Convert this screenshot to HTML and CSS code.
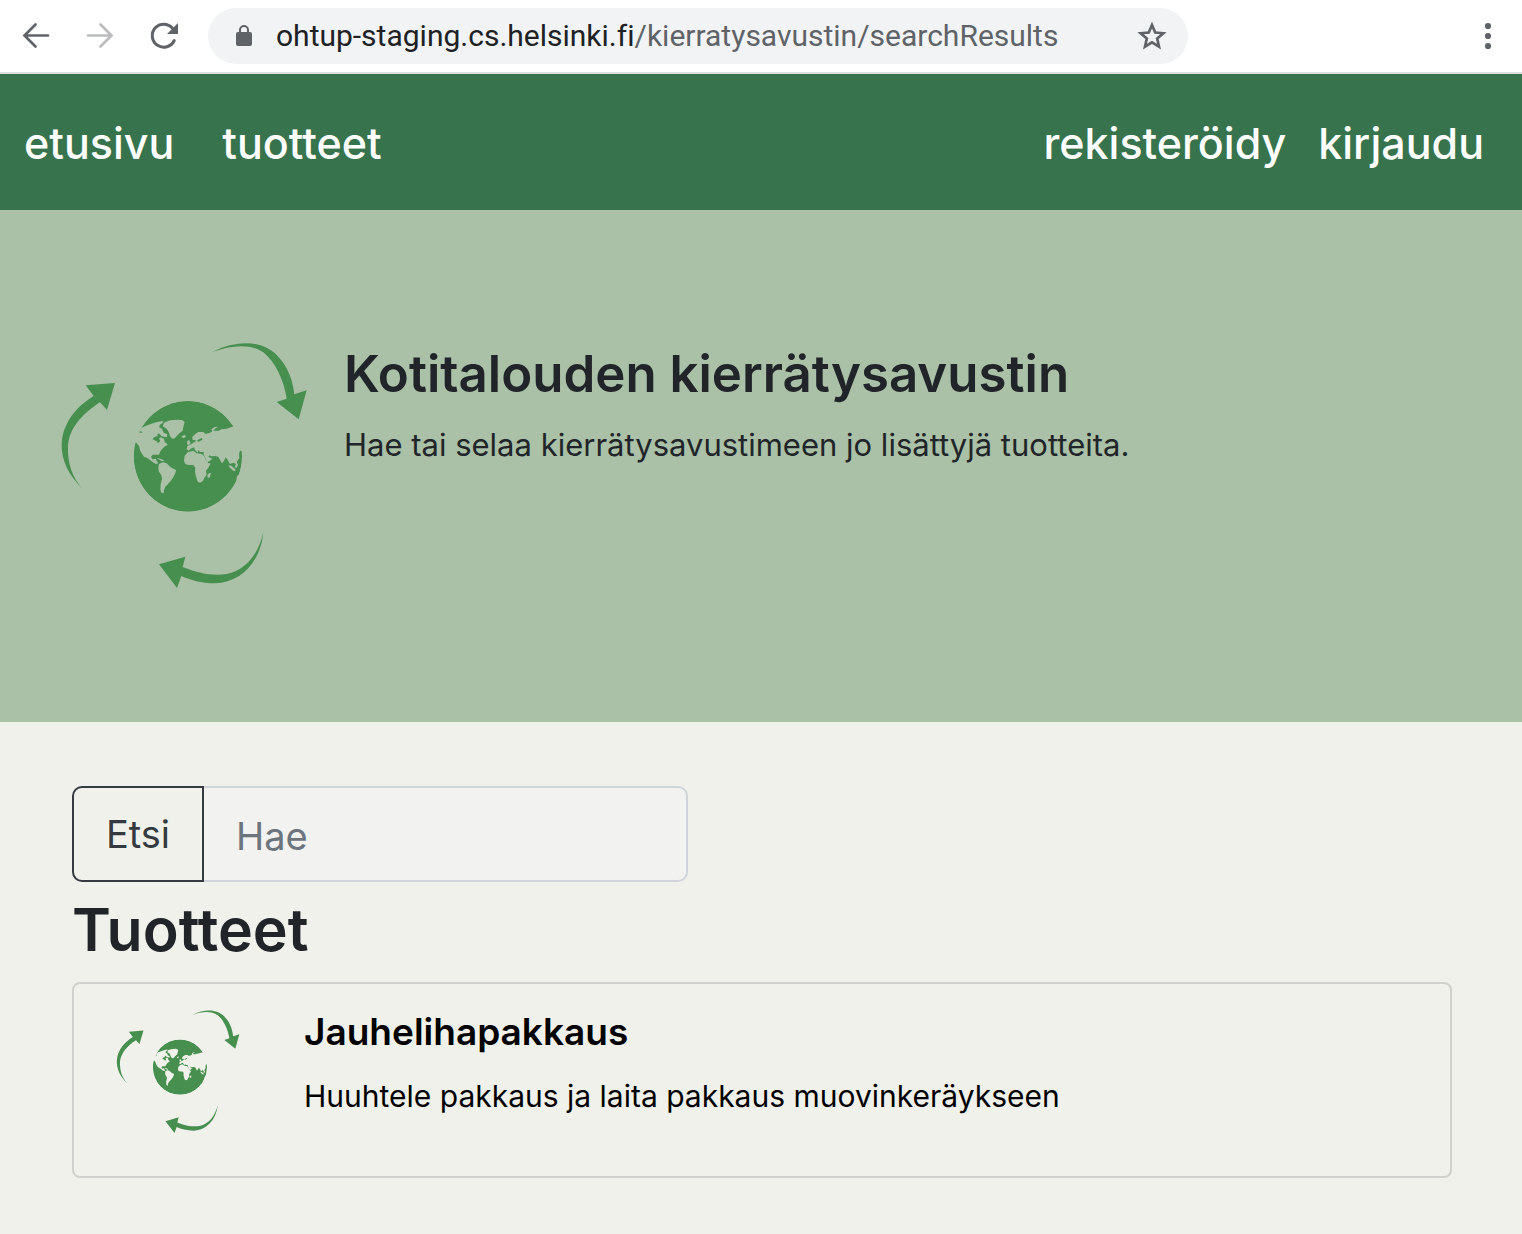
FILE: index.html
```html
<!DOCTYPE html>
<html lang="fi">
<head>
<meta charset="utf-8">
<meta name="viewport" content="width=device-width, initial-scale=1">
<title>Kotitalouden kierrätysavustin</title>
<link rel="stylesheet" href="styles.css">
</head>
<body>
<svg class="defs" aria-hidden="true">
  <defs>
    <mask id="land" maskUnits="userSpaceOnUse" x="270" y="200" width="350" height="360">
      <ellipse cx="443.500" cy="379" rx="162.500" ry="166" fill="#fff"/>
      <g fill="#000">
        <path d="M270 306 298 307 304 309 308 306 298 303 309 291 330 283 348 277 366 273 371 276 360 284 357 292 366 296 371 308 382 313 380 322 372 320 364 318 358 311 352 312 353 318 342 322 338 328 350 334 354 340 361 333 357 325 363 322 372 326 374 336 384 344 376 348 366 357 360 366 357 374 338 374 333 380 337 388 347 386 350 392 355 400 347 402 335 394 322 384 312 380 304 368 300 360 297 348 290 340 288 336 270 330Z"/>
        <path d="M270 306 309 290 298 303Z"/>
        <path d="M357 402 368 397 380 400 388 408 396 414 408 420 406 430 400 442 392 453 382 464 376 470 372 480 371 490 364 488 361 478 362 462 366 446 364 436 356 424 355 412Z"/>
        <path d="M372 278 390 271 415 269 428 271 434 277 430 290 428 302 418 310 410 318 404 325 397 326 390 318 386 306 380 296 368 289Z"/>
        <path d="M424 319 434 315 438 320 430 325ZM442 333 447 330 452 340 447 345 441 343ZM350 384 362 386 374 392 366 394Z"/>
        <path d="M440 358 442 348 455 342 462 337 470 332 476 335 487 329 486 324 478 327 470 333 464 330 458 330 457 320 466 312 475 306 490 306 497 312 510 308 517 304 514 298 524 291 534 290 525 296 520 302 535 302 545 298 560 296 575 291 620 280 620 365 600 362 597 372 598 384 590 396 594 404 590 414 584 410 588 402 580 398 570 402 563 390 557 382 552 392 546 400 540 390 535 380 525 378 514 379 508 376 505 380 512 384 517 386 510 392 502 397 494 380 490 372 492 366 480 366 476 360 472 368 464 358 462 352 452 356 446 362Z"/>
        <path d="M443 367 460 362 470 370 485 372 492 378 498 390 505 400 512 400 505 413 498 422 500 434 494 442 488 454 480 458 473 455 468 440 465 426 466 414 460 405 446 405 436 402 432 392 434 378Z"/>
        <path d="M508 429 513 430 508 444 502 442 503 434ZM565 405 575 408 588 420 582 424 570 414ZM610 420 598 432 590 440 590 454 610 450Z"/>
      </g>
    </mask>
    <symbol id="logo" viewBox="0 0 870 810">
      <g fill="#478f4f">
        <ellipse cx="443.500" cy="379" rx="162.500" ry="166" mask="url(#land)"/>
        <path d="M516 66C600 25 670 35 710 75 740 105 758 145 763 193L800 181 776 268 710 216 740 206C732 150 705 95 670 67 630 40 575 45 516 66Z"/>
        <path d="M129 478C85 435 63 390 65 340 70 275 110 230 161 198L137 166 225 159 201 240 180 217C130 250 90 290 84 345 82 400 95 440 129 478Z"/>
        <path d="M670 608C660 700 600 758 525 760 485 760 450 750 424 738L411 774 357 703 436 680 428 711C480 732 520 738 560 732 620 720 655 670 670 608Z"/>
      </g>
    </symbol>
  </defs>
</svg>

<div class="toolbar">
  <button class="tool" type="button" aria-label="Takaisin">
    <svg viewBox="0 0 32 32"><path d="M28 15.500H5M15.500 4.500 4.500 15.500 15.500 26.500" fill="none" stroke="#5f6368" stroke-width="2.700" stroke-linecap="round"/></svg>
  </button>
  <button class="tool" type="button" aria-label="Eteenpäin" disabled>
    <svg viewBox="0 0 32 32"><path d="M4 15.500H27M16.500 4.500 27.500 15.500 16.500 26.500" fill="none" stroke="#babcbe" stroke-width="2.700" stroke-linecap="round"/></svg>
  </button>
  <button class="tool" type="button" aria-label="Lataa uudelleen">
    <svg viewBox="0 0 32 32"><path d="M26.200 20.500A11.500 11.500 0 1 1 24.500 8.200" fill="none" stroke="#5f6368" stroke-width="3" stroke-linecap="round"/><path d="M30 3V14H19Z" fill="#5f6368"/></svg>
  </button>
  <div class="address">
    <svg class="lock" viewBox="0 0 16 22"><rect y="7" width="16" height="14" rx="2" fill="#5f6368"/><path d="M4 8V5a4 4 0 0 1 8 0V8" fill="none" stroke="#5f6368" stroke-width="2"/></svg>
    <span class="url"><span class="host">ohtup-staging.cs.helsinki.fi</span>/kierratysavustin/searchResults</span>
    <button class="star" type="button" aria-label="Lisää kirjanmerkki">
      <svg viewBox="0 0 32 32"><path d="M16 5 19.200 12.500 27.400 13.200 21.200 18.600 23 26.600 16 22.400 9 26.600 10.800 18.600 4.600 13.200 12.800 12.500Z" fill="none" stroke="#5f6368" stroke-width="2.700"/></svg>
    </button>
  </div>
  <button class="tool menu" type="button" aria-label="Valikko">
    <svg viewBox="0 0 32 32" fill="#5f6368"><circle cx="16" cy="6" r="3.100"/><circle cx="16" cy="16" r="3.100"/><circle cx="16" cy="26" r="3.100"/></svg>
  </button>
</div>

<nav class="navbar">
  <div class="nav-main"><a href="#etusivu">etusivu</a><a href="#tuotteet">tuotteet</a></div>
  <div class="nav-user"><a href="#rekisteroidy">rekisteröidy</a><a href="#kirjaudu">kirjaudu</a></div>
</nav>

<header class="hero">
  <svg class="hero-logo" role="img" aria-label="Maapallo ja kiertävät nuolet"><use href="#logo"/></svg>
  <div>
    <h1>Kotitalouden kierrätysavustin</h1>
    <p>Hae tai selaa kierrätysavustimeen jo lisättyjä tuotteita.</p>
  </div>
</header>

<main class="content">
  <form class="search">
    <button type="submit">Etsi</button>
    <input type="text" placeholder="Hae" aria-label="Hae">
  </form>
  <h2>Tuotteet</h2>
  <a class="card" href="#jauhelihapakkaus">
    <svg class="card-logo" aria-hidden="true"><use href="#logo"/></svg>
    <div>
      <h3>Jauhelihapakkaus</h3>
      <p>Huuhtele pakkaus ja laita pakkaus muovinkeräykseen</p>
    </div>
  </a>
</main>
</body>
</html>
```
FILE: styles.css
```css
* { box-sizing: border-box; }

body {
  margin: 0;
  background: #f1f1eb;
  color: #212529;
  font-family: Inter, "Liberation Sans", sans-serif;
  font-variant-ligatures: none;
}

h1, h2, h3, p { margin: 0; }
a { color: inherit; text-decoration: none; }
button { padding: 0; border: 0; background: none; font: inherit; color: inherit; }
svg { display: block; }

.defs { position: absolute; width: 0; height: 0; }

/* Browser toolbar */
.toolbar {
  display: flex;
  align-items: center;
  gap: 32px;
  height: 74px;
  padding: 8px 18px 8px 20px;
  border-bottom: 2px solid #dadce0;
  background: #fff;
}
.tool, .tool svg, .star, .star svg { width: 32px; height: 32px; }
.menu { margin-left: auto; }
.address {
  display: flex;
  align-items: center;
  flex: 0 1 980px;
  height: 56px;
  margin-left: -4px;
  padding: 0 20px 0 28px;
  border-radius: 28px;
  background: #f1f3f4;
  color: #5f6368;
  font-family: Roboto, sans-serif;
  font-size: 30px;
  line-height: 32px;
}
.lock { width: 16px; height: 22px; margin-right: 24px; }
.host { color: #202124; }
.star { margin-left: auto; }

/* Site navigation */
.navbar {
  display: flex;
  justify-content: space-between;
  padding: 33px 38px 31px 24px;
  background: #37734c;
  color: #fff;
  font-size: 43px;
  line-height: 72px;
  font-weight: 500;
}
.nav-main, .nav-user { display: flex; }
.nav-main { gap: 48px; }
.nav-user { gap: 32px; }

/* Intro banner */
.hero {
  display: flex;
  gap: 14px;
  padding: 120px 40px 122px;
  background: #aac0a7;
}
.hero-logo { flex: none; width: 290px; height: 270px; }
.hero h1 {
  margin: 10px 0 13px;
  font-size: 51px;
  line-height: 68px;
  font-weight: 600;
}
.hero p { font-size: 31px; line-height: 48px; }

/* Search and product list */
.content { padding: 64px 70px 56px 72px; }
.search {
  display: flex;
  max-width: 616px;
  height: 96px;
  font-size: 38px;
}
.search button {
  flex: none;
  width: 132px;
  border: 2px solid #343a40;
  border-radius: 10px 0 0 10px;
  color: #343a40;
}
.search input {
  flex: 1;
  min-width: 0;
  padding: 4px 32px 0;
  border: 2px solid #ced4da;
  border-left: 0;
  border-radius: 0 10px 10px 0;
  background: #f2f2f0;
  font: inherit;
}
.search input::placeholder { color: #6c757d; opacity: 1; }
.content h2 {
  margin: 12px 0 16px;
  font-size: 59px;
  line-height: 72px;
  font-weight: 600;
}
.card {
  display: flex;
  gap: 53px;
  padding: 20px 32px 37px;
  border: 2px solid #d0d1cc;
  border-radius: 8px;
  color: #000;
}
.card-logo { flex: none; width: 145px; height: 135px; }
.card h3 {
  margin: 4px 0 16px;
  font-size: 37px;
  line-height: 48px;
  font-weight: 600;
}
.card p { font-size: 30px; line-height: 48px; }
```
